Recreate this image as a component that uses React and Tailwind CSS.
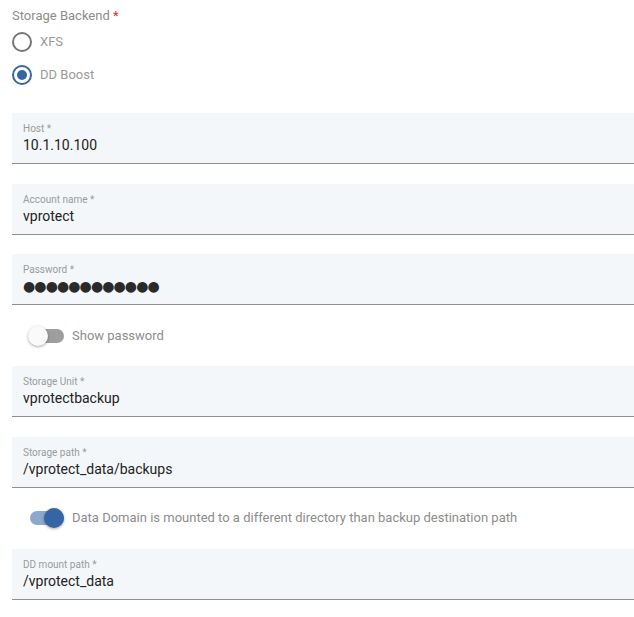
import React from "react";

function Field({ label, value, children }) {
  return (
    <div className="h-[51px] bg-[#f4f7fa] border-b border-[#8e8e8e] pl-[11px] pt-[10px]">
      <div className="text-[10px] leading-[12px] text-[#9a9a9a]">{label} *</div>
      <div className="text-[14px] leading-[18px] text-[#222] mt-[1px]">{children || value}</div>
    </div>
  );
}

function Toggle({ on, label }) {
  return (
    <div className="h-[61px] flex items-center">
      <div className="relative w-[34px] h-[14px] ml-[18px]">
        <div className={"absolute inset-0 rounded-full " + (on ? "bg-[#8ea8cb]" : "bg-[#9e9e9e]")} />
        <div
          className={
            "absolute top-[-3px] w-[20px] h-[20px] rounded-full shadow-[0_1px_3px_rgba(0,0,0,0.35)] " +
            (on ? "left-[14px] bg-[#3566a3]" : "left-[-2px] bg-[#fafafa]")
          }
        />
      </div>
      <span className="ml-[8px] text-[13px] text-[#8c8c8c]">{label}</span>
    </div>
  );
}

function Radio({ checked, label }) {
  return (
    <div className="h-[33px] flex items-center">
      <div
        className={
          "w-[20px] h-[20px] rounded-full border-2 flex items-center justify-center " +
          (checked ? "border-[#3566a3]" : "border-[#767676]")
        }
      >
        {checked && <div className="w-[10px] h-[10px] rounded-full bg-[#3566a3]" />}
      </div>
      <span className="ml-[8px] text-[13px] text-[#9a9a9a]">{label}</span>
    </div>
  );
}

export default function App() {
  return (
    <div className="w-[634px] h-[617px] bg-white pl-[12px] font-['Roboto',sans-serif]">
      <div className="pt-[7px] text-[13px] leading-[18px] text-[#8c8c8c]">
        Storage Backend <span className="text-[#d32f2f]">*</span>
      </div>
      <div>
        <Radio label="XFS" />
        <Radio checked label="DD Boost" />
      </div>
      <div className="mt-[22px] flex flex-col gap-[19.5px]">
        <Field label="Host" value="10.1.10.100" />
        <Field label="Account name" value="vprotect" />
        <Field label="Password">
          <span className="font-['DejaVu_Sans',sans-serif] text-[14px] leading-[18px] tracking-[-0.9px] text-[#2a2a2a]">
            ●●●●●●●●●●●●
          </span>
        </Field>
      </div>
      <Toggle label="Show password" />
      <div className="flex flex-col gap-[19.5px]">
        <Field label="Storage Unit" value="vprotectbackup" />
        <Field label="Storage path" value="/vprotect_data/backups" />
      </div>
      <Toggle on label="Data Domain is mounted to a different directory than backup destination path" />
      <Field label="DD mount path" value="/vprotect_data" />
    </div>
  );
}
